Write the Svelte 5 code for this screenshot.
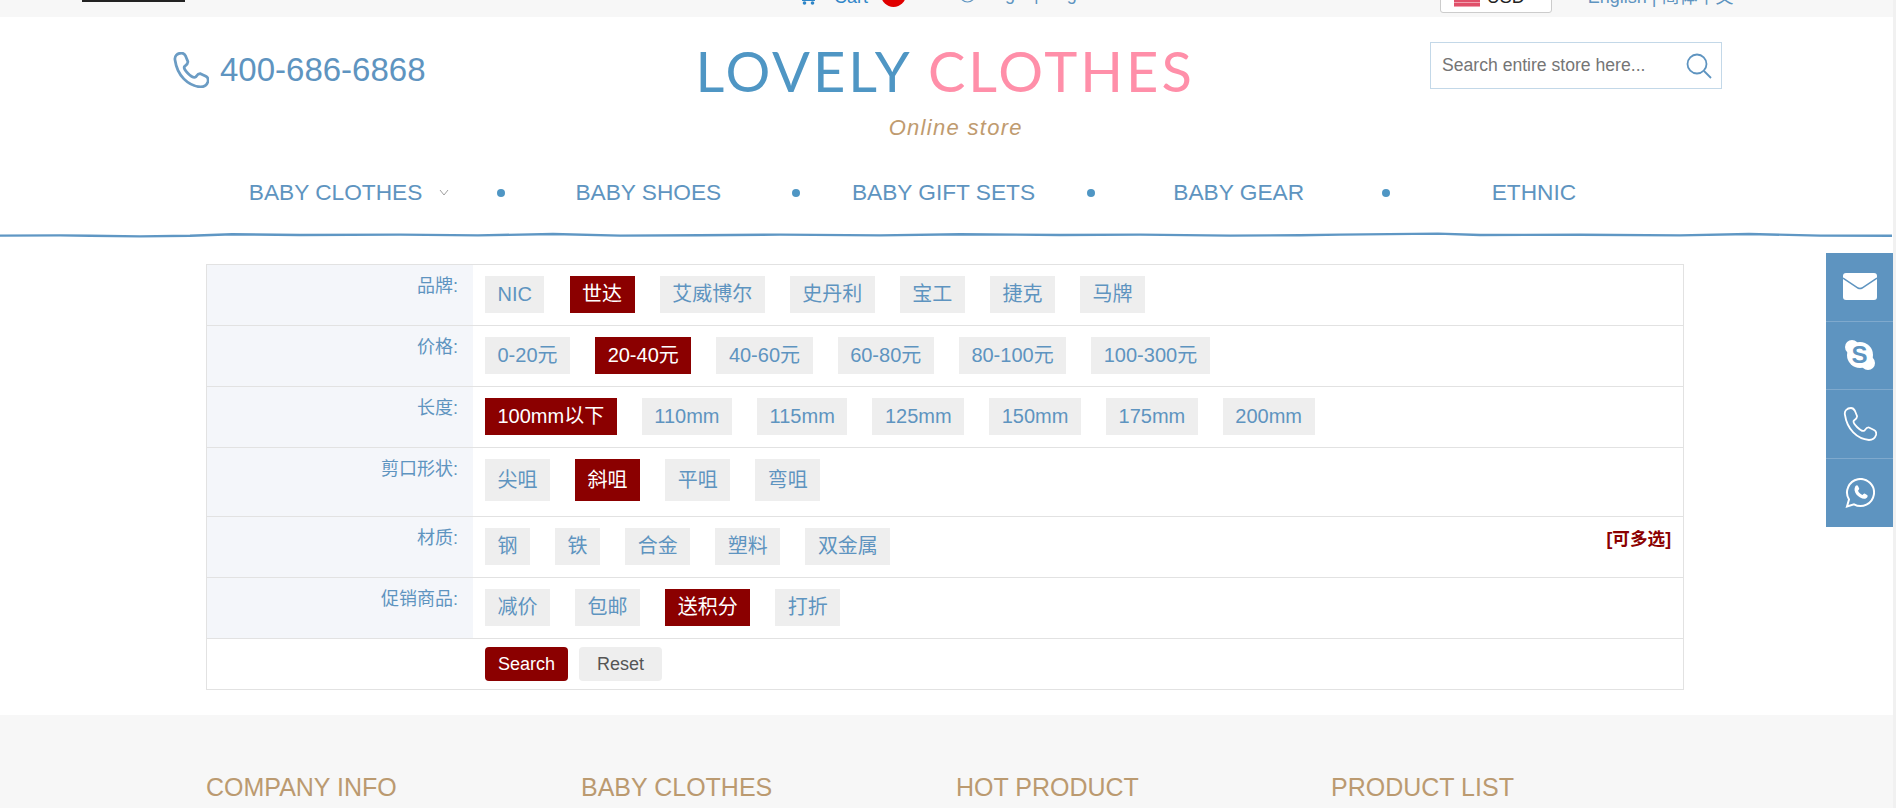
<script>
  const filters = [
    { label: '品牌:', tags: ['NIC', '世达', '艾威博尔', '史丹利', '宝工', '捷克', '马牌'], active: '世达' },
    { label: '价格:', tags: ['0-20元', '20-40元', '40-60元', '60-80元', '80-100元', '100-300元'], active: '20-40元' },
    { label: '长度:', tags: ['100mm以下', '110mm', '115mm', '125mm', '150mm', '175mm', '200mm'], active: '100mm以下' },
    { label: '剪口形状:', tags: ['尖咀', '斜咀', '平咀', '弯咀'], active: '斜咀', tall: true },
    { label: '材质:', tags: ['钢', '铁', '合金', '塑料', '双金属'], active: '', multi: true },
    { label: '促销商品:', tags: ['减价', '包邮', '送积分', '打折'], active: '送积分' }
  ];
  const nav = ['BABY CLOTHES', 'BABY SHOES', 'BABY GIFT SETS', 'BABY GEAR', 'ETHNIC'];
  const footer = ['COMPANY INFO', 'BABY CLOTHES', 'HOT PRODUCT', 'PRODUCT LIST'];
  const wave = 'M0 3.6 L60 3.4 L90 3.8 L140 4.4 L190 3.8 L232 2.2 L300 3 L400 2.6 L478 3.4 L553 2 L620 3.6 L700 3.2 L780 2.6 L880 3.4 L960 2.2 L1060 3 L1140 2.6 L1230 3.6 L1300 3.2 L1340 2.6 L1438 1.6 L1480 3 L1580 2.8 L1680 3.4 L1749 2 L1820 3.6 L1892 3.8';
  const handset = 'M2 8C1 4 4 1 8 1c2 0 3 1 4 3l2 5c.5 2-1 3-3 4.5-1 1 0 3.5 3 6.5s6 4.5 7.5 3.5c1.5-2 2.5-3.5 4.5-3l5 2.5c2 1 2.5 3 2 5-1 3-4 5-7 5C14 32 4 22 2 8z';
</script>

<div class="page">
  <div class="topbar">
    <span class="account"></span>
    <span class="cart">
      <svg width="18" height="18" viewBox="0 0 18 18"><path d="M1 4h3l1 9h11l1-8" fill="none" stroke="#2f86c8" stroke-width="2"/><circle cx="6.5" cy="16" r="1.8" fill="#2f86c8"/><circle cx="14.5" cy="16" r="1.8" fill="#2f86c8"/></svg>
      <span>Cart</span>
      <b class="badge"></b>
    </span>
    <span class="login">
      <svg width="17" height="17" viewBox="0 0 17 17"><circle cx="8.5" cy="8.5" r="7.5" fill="none" stroke="#5e94c0" stroke-width="1.2"/></svg>
      <span>Login | Register</span>
    </span>
    <span class="currency"><i class="flag"></i><span class="code">USD</span></span>
    <span class="lang">English | 简体中文</span>
  </div>

  <header class="head">
    <div class="phone">
      <svg width="36" height="36" viewBox="0 0 34 34"><path d={handset} fill="none" stroke="#6b9cc4" stroke-width="2.6"/></svg>
      <span>400-686-6868</span>
    </div>
    <div class="logo">
      <div class="logo-name"><span class="blue">LOVELY</span> <span class="pink">CLOTHES</span></div>
      <div class="logo-sub">Online store</div>
    </div>
    <div class="search">
      <span class="placeholder">Search entire store here...</span>
      <svg width="26" height="26" viewBox="0 0 26 26"><circle cx="11" cy="11" r="9.5" fill="none" stroke="#5e94c0" stroke-width="1.8"/><path d="M18 18l7 7" stroke="#5e94c0" stroke-width="1.8"/></svg>
    </div>
  </header>

  <nav class="nav">
    {#each nav as item, i}
      <div class="nav-item" class:has-sub={i === 0}>
        <span class="nav-label">{item}</span>
        {#if i === 0}
          <svg class="chev" width="10" height="7" viewBox="0 0 10 7"><path d="M1 1l4 5 4-5" fill="none" stroke="#a0a0a0"/></svg>
        {/if}
        {#if i < nav.length - 1}<i class="dot"></i>{/if}
      </div>
    {/each}
  </nav>

  <svg class="wave" width="1893" height="6" viewBox="0 0 1893 6"><path d={wave} fill="none" stroke="#5f97c4" stroke-width="2.4"/></svg>

  <section class="filter">
    {#each filters as row}
      <div class="row" class:tall={row.tall}>
        <div class="label">{row.label}</div>
        <div class="tags">
          {#each row.tags as tag}
            <span class="tag" class:on={tag === row.active}>{tag}</span>
          {/each}
          {#if row.multi}<b class="multi">[可多选]</b>{/if}
        </div>
      </div>
    {/each}
    <div class="row actions">
      <div class="label blank"></div>
      <div class="btns">
        <button class="btn primary">Search</button>
        <button class="btn">Reset</button>
      </div>
    </div>
  </section>

  <footer class="foot">
    {#each footer as title}
      <h3>{title}</h3>
    {/each}
  </footer>

  <aside class="side">
    <div class="side-item">
      <svg width="34" height="27" viewBox="0 0 34 27"><rect width="34" height="27" rx="3" fill="#fff"/><path d="M0 5l15 10q2 1.2 4 0L34 5" fill="none" stroke="#5e94c0" stroke-width="1.5"/></svg>
    </div>
    <div class="side-item">
      <div class="skype"><span>S</span></div>
    </div>
    <div class="side-item">
      <svg width="34" height="34" viewBox="0 0 34 34"><path d={handset} fill="none" stroke="#fff" stroke-width="1.8"/></svg>
    </div>
    <div class="side-item">
      <svg width="30" height="30" viewBox="0 0 30 30"><path d="M2 28.5l2-7A13.5 13.5 0 1 1 9 26.3z" fill="none" stroke="#fff" stroke-width="2"/><path d="M10.5 8c1-1 2-1 2.5 0l1.2 2.5c.2.6-.6 1.5-1.2 2.2.9 2 2.5 3.5 4.5 4.3.7-.7 1.5-1.6 2.1-1.4l2.5 1.3c.8.5.7 1.5 0 2.5-1.5 1.8-4 1.7-7 0-3-1.7-5-4.3-5.5-7-.2-1.8.2-3.3.9-4.4z" fill="#fff"/></svg>
    </div>
  </aside>
</div>

<style>
  :global(body) {
    margin: 0;
    background: #f1f1f1;
    overflow: hidden;
  }

  .page {
    width: 1893px;
    height: 808px;
    overflow: hidden;
    background: #fff;
    font-family: "Liberation Sans", "Noto Sans CJK SC", sans-serif;
    color: #5e94c0;
  }

  /* top strip, scrolled mostly out of view */
  .topbar {
    height: 17px;
    background: #f7f7f7;
    display: flex;
    align-items: flex-end;
    font-size: 18px;
    line-height: 22px;
    white-space: nowrap;
  }

  .account {
    width: 103px;
    height: 2px;
    margin: 0 0 15px 82px;
    background: #222;
  }

  .cart {
    display: flex;
    align-items: flex-end;
    margin: 0 0 9px 613px;
    color: #2f86c8;
    gap: 18px;
  }

  .cart svg {
    margin-bottom: 3px;
  }

  .badge {
    width: 25px;
    height: 25px;
    border-radius: 50%;
    background: #e00000;
    margin: 0 0 1px -5px;
  }

  .login {
    display: flex;
    align-items: flex-end;
    gap: 9px;
    margin: 0 0 12px 53px;
  }

  .login svg {
    margin-bottom: 2px;
  }

  .currency {
    display: flex;
    align-items: flex-end;
    gap: 7px;
    width: 112px;
    height: 30px;
    box-sizing: border-box;
    padding: 0 0 5px 13px;
    margin: 0 0 4px 329px;
    background: #fff;
    border: 1px solid #ccc;
    border-radius: 3px;
    color: #222;
  }

  .code {
    margin-bottom: -1px;
  }

  .flag {
    width: 26px;
    height: 16px;
    background: repeating-linear-gradient(#e0506a 0 3px, #f0a0ae 3px 4px);
  }

  .lang {
    margin: 0 0 9px 36px;
  }

  .head {
    height: 124px;
    padding: 21px 0 0 173px;
    box-sizing: border-box;
    display: flex;
    align-items: flex-start;
  }

  .phone {
    display: flex;
    align-items: center;
    gap: 11px;
    width: 522.5px;
    margin-top: 13px;
    font-size: 33px;
    line-height: 38px;
  }

  .logo {
    width: 734.5px;
    text-align: center;
    box-sizing: border-box;
    padding-right: 250px;
  }

  .logo-name {
    font-family: Lato, sans-serif;
    font-size: 56px;
    line-height: 66px;
    letter-spacing: 3px;
    white-space: nowrap;
  }

  .blue {
    color: #4f96c4;
  }

  .pink {
    color: #ff8fa9;
  }

  .logo-sub {
    margin-top: 11px;
    padding-left: 36px;
    font-size: 22px;
    line-height: 26px;
    font-style: italic;
    letter-spacing: 1.3px;
    color: #bf9b6f;
  }

  .search {
    width: 292px;
    height: 47px;
    box-sizing: border-box;
    margin-top: 4px;
    padding: 0 9px 0 11px;
    border: 1px solid #c3d8e8;
    display: flex;
    align-items: center;
    justify-content: space-between;
    font-size: 17.6px;
  }

  .placeholder {
    color: #757575;
  }

  .nav {
    width: 1476px;
    height: 91px;
    box-sizing: border-box;
    padding-top: 10px;
    margin-left: 205.5px;
    display: flex;
    align-items: center;
  }

  .nav-item {
    flex: 1;
    position: relative;
    text-align: center;
    font-size: 22.7px;
    line-height: 26px;
  }

  .has-sub .nav-label {
    padding-right: 35px;
  }

  .chev {
    position: absolute;
    left: 233.5px;
    top: 10px;
  }

  .dot {
    position: absolute;
    right: -4px;
    top: 10px;
    width: 8px;
    height: 8px;
    border-radius: 50%;
    background: #4f96c4;
  }

  .wave {
    display: block;
  }

  .filter {
    width: 1478px;
    margin: 26px 0 0 206px;
    border: 1px solid #e2e2e2;
    box-sizing: border-box;
  }

  .row {
    display: flex;
    border-bottom: 1px solid #e2e2e2;
  }

  .row:last-child {
    border-bottom: 0;
  }

  .label {
    width: 266px;
    flex: none;
    box-sizing: border-box;
    padding: 9px 15px 0 0;
    text-align: right;
    font-size: 18px;
    line-height: 24px;
    background: #f4f6fa;
  }

  .label.blank {
    background: #fff;
  }

  .tags {
    flex: 1;
    display: flex;
    align-items: flex-start;
    gap: 25.1px;
    padding: 11px 12px 12px;
  }

  .tall .tags {
    padding-bottom: 15px;
  }

  .tag {
    height: 37px;
    padding: 0 12.5px;
    background: #eee;
    font-size: 20px;
    line-height: 37px;
  }

  .tall .tag {
    height: 42px;
    line-height: 42px;
  }

  .tag.on {
    background: #8b0000;
    color: #fff;
  }

  .multi {
    margin-left: auto;
    margin-top: -1px;
    font-size: 17.6px;
    line-height: 24px;
    color: #8b0000;
  }

  .btns {
    display: flex;
    gap: 11px;
    padding: 8px 12px;
  }

  .btn {
    width: 83px;
    height: 34px;
    padding: 0;
    border: 0;
    border-radius: 4px;
    background: #eee;
    color: #555;
    font: 18px "Liberation Sans", sans-serif;
  }

  .btn.primary {
    background: #8b0000;
    color: #fff;
  }

  .foot {
    margin-top: 25px;
    height: 120px;
    background: #f7f7f7;
    display: flex;
    padding: 57px 0 0 206px;
  }

  .foot h3 {
    width: 375px;
    margin: 0;
    font-size: 25px;
    line-height: 30px;
    font-weight: 400;
    color: #bb9a70;
  }

  .side {
    position: fixed;
    left: 1826px;
    top: 253px;
    width: 67px;
    background: #5e94c0;
  }

  .side-item {
    height: 68.5px;
    display: flex;
    align-items: center;
    justify-content: center;
    border-bottom: 1px solid #7fa9cd;
    box-sizing: border-box;
  }

  .side-item:last-child {
    border-bottom: 0;
  }

  .skype {
    width: 26px;
    height: 26px;
    border-radius: 50%;
    background: #fff;
    position: relative;
    display: flex;
    align-items: center;
    justify-content: center;
    font: bold 24px "Liberation Sans", sans-serif;
    color: #5e94c0;
  }

  .skype::before,
  .skype::after {
    content: "";
    position: absolute;
    width: 14px;
    height: 14px;
    border-radius: 50%;
    background: #fff;
  }

  .skype::before {
    left: -2px;
    top: -2px;
  }

  .skype::after {
    right: -2px;
    bottom: -2px;
  }

  .skype span {
    position: relative;
    z-index: 1;
  }
</style>
